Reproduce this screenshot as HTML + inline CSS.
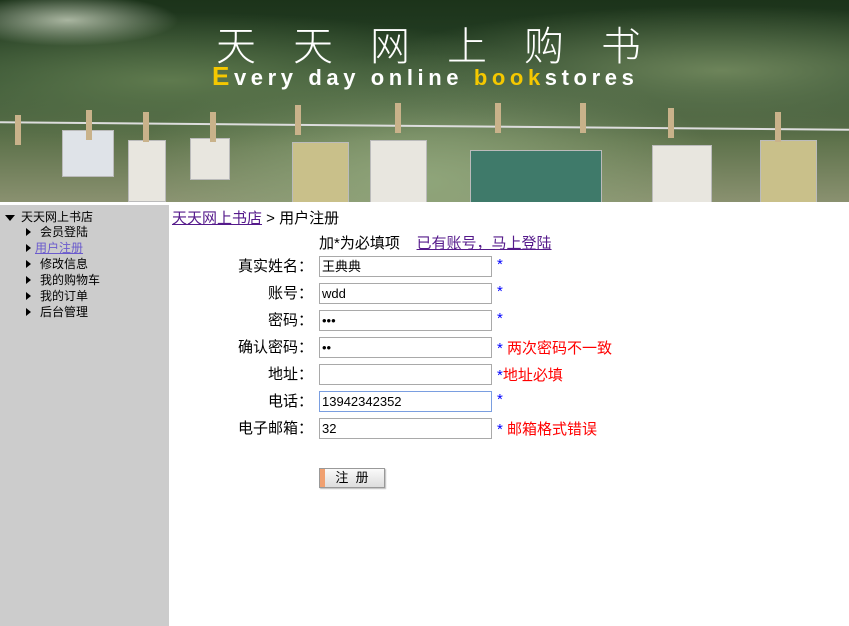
<!DOCTYPE html>
<html><head><meta charset="utf-8"><style>
body{margin:0;width:849px;height:626px;overflow:hidden;background:#fff;font-family:"Liberation Sans","Noto Sans CJK SC",sans-serif;position:relative}
#ban{position:absolute;left:0;top:0;width:849px;height:202px;overflow:hidden;
background:radial-gradient(ellipse at 8% 10%,#a9b5a0 0,transparent 10%),radial-gradient(ellipse at 20% 40%,#5f7a4e 0,transparent 40%),radial-gradient(ellipse at 85% 35%,#6d845a 0,transparent 35%),radial-gradient(ellipse at 50% 90%,#8fa57a 0,transparent 50%),linear-gradient(#1c331a 0,#29452a 40%,#5f734c 70%,#8a9170 100%)}
.t1{position:absolute;left:216px;top:14px;color:#fff;font-size:40px;letter-spacing:37px;font-family:"Noto Sans CJK SC",sans-serif;font-weight:300}
.t2{position:absolute;left:212px;top:61px;color:#fff;font-size:22px;font-weight:bold;letter-spacing:4.6px}
.t2 b{color:#f5c800}
.line{position:absolute;left:0;top:125px;width:849px;height:2px;background:#ddd;transform:rotate(0.5deg)}
.card{position:absolute;background:#e8e6df;border:1px solid #bbb}
.pin{position:absolute;width:6px;height:30px;background:#c9b28a}
#side{position:absolute;left:0;top:205px;width:169px;height:421px;background:#ccc;font-size:12px}
#side div{position:absolute;white-space:nowrap}
.tri{display:inline-block;width:0;height:0;border-top:4px solid transparent;border-bottom:4px solid transparent;border-left:5px solid #000;margin-right:9px}
.tri2{display:inline-block;width:0;height:0;border-left:5px solid transparent;border-right:5px solid transparent;border-top:6px solid #000}
a{color:#551a8b;text-decoration:underline}
.c{position:absolute;font-size:15px;white-space:nowrap}
.lab{position:absolute;right:536px;font-size:15px;color:#000}
.in{position:absolute;left:319px;border:1px solid #a9a9a9;font-size:13px;line-height:19px;padding-left:2px;box-sizing:border-box;width:173px;height:21px}
.st{position:absolute;left:497px;font-size:15px;color:#0000ff}
.st span{color:#f00}
</style></head><body>
<div id="ban">
<div class="t1">天天网上购书</div>
<div class="t2"><b style="font-size:26px">E</b>very day online <b>book</b>stores</div>
<div class="line"></div>
<div class="card" style="left:62px;top:130px;width:50px;height:45px;background:#dfe3e8"></div>
<div class="card" style="left:128px;top:140px;width:36px;height:60px"></div>
<div class="card" style="left:190px;top:138px;width:38px;height:40px"></div>
<div class="card" style="left:292px;top:142px;width:55px;height:60px;background:#c9c08a"></div>
<div class="card" style="left:370px;top:140px;width:55px;height:62px"></div>
<div class="card" style="left:470px;top:150px;width:130px;height:52px;background:#3f7a6a"></div>
<div class="card" style="left:652px;top:145px;width:58px;height:57px"></div>
<div class="card" style="left:760px;top:140px;width:55px;height:62px;background:#c9c08a"></div>
<div class="pin" style="left:86px;top:110px"></div><div class="pin" style="left:143px;top:112px"></div><div class="pin" style="left:210px;top:112px"></div><div class="pin" style="left:295px;top:105px"></div><div class="pin" style="left:395px;top:103px"></div><div class="pin" style="left:495px;top:103px"></div><div class="pin" style="left:580px;top:103px"></div><div class="pin" style="left:668px;top:108px"></div><div class="pin" style="left:775px;top:112px"></div><div class="pin" style="left:15px;top:115px"></div>
</div>
<div id="side">
<div style="left:5px;top:3px"><span class="tri2" style="margin-right:6px"></span>天天网上书店</div>
<div style="left:26px;top:18px"><span class="tri"></span>会员登陆</div>
<div style="left:26px;top:34px"><span class="tri" style="margin-right:4px"></span><a style="color:#6a5acd">用户注册</a></div>
<div style="left:26px;top:50px"><span class="tri"></span>修改信息</div>
<div style="left:26px;top:66px"><span class="tri"></span>我的购物车</div>
<div style="left:26px;top:82px"><span class="tri"></span>我的订单</div>
<div style="left:26px;top:98px"><span class="tri"></span>后台管理</div>
</div>
<div class="c" style="left:172px;top:207px"><a>天天网上书店</a> &gt; 用户注册</div>
<div class="c" style="left:319px;top:232px">加*为必填项 &nbsp;&nbsp; <a>已有账号，马上登陆</a></div>
<div class="lab" style="top:255px">真实姓名：</div><div class="in" style="top:256px">王典典</div><div class="st" style="top:256px">*</div>
<div class="lab" style="top:282px">账号：</div><div class="in" style="top:283px">wdd</div><div class="st" style="top:283px">*</div>
<div class="lab" style="top:309px">密码：</div><div class="in" style="top:310px">•••</div><div class="st" style="top:310px">*</div>
<div class="lab" style="top:336px">确认密码：</div><div class="in" style="top:337px">••</div><div class="st" style="top:337px">* <span>两次密码不一致</span></div>
<div class="lab" style="top:363px">地址：</div><div class="in" style="top:364px"></div><div class="st" style="top:364px">*<span>地址必填</span></div>
<div class="lab" style="top:390px">电话：</div><div class="in" style="top:391px;border-color:#7a9ee0">13942342352</div><div class="st" style="top:391px">*</div>
<div class="lab" style="top:417px">电子邮箱：</div><div class="in" style="top:418px">32</div><div class="st" style="top:418px">* <span>邮箱格式错误</span></div>
<div style="position:absolute;left:319px;top:468px;width:64px;height:18px;border:1px solid #999;background:linear-gradient(#fafafa,#ddd);font-size:13px;line-height:18px;text-align:center;box-shadow:1px 1px 1px #bbb"><span style="position:absolute;left:0;top:0;width:5px;height:18px;background:#f0a070"></span>注&nbsp;&nbsp;册</div>
</body></html>
